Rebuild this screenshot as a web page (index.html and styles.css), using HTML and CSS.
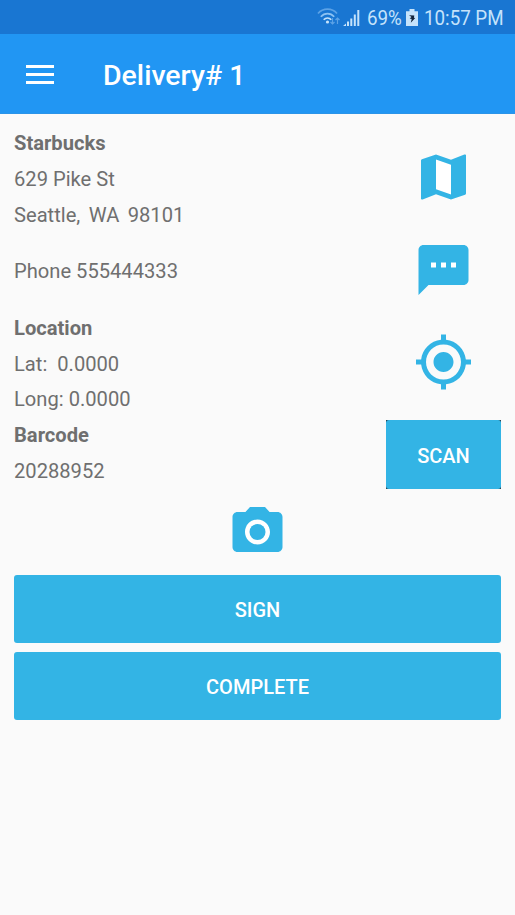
FILE: index.html
```html
<!DOCTYPE html>
<html lang="en">
<head>
<meta charset="utf-8">
<title>Delivery# 1</title>
<link rel="stylesheet" href="styles.css">
</head>
<body>
<div class="status">
  <svg class="wifi" width="24" height="20" viewBox="0 0 24 20" fill="none">
    <path d="M1 5.500C6-.3 15-.3 20 5.500" stroke="#5ca2e6" stroke-width="1.700"/>
    <path d="M3.800 8.800c3.800-4.200 9.600-4.200 13.400 0" stroke="#8dc2f2" stroke-width="1.700"/>
    <path d="M6.700 11.800c2.200-2.400 5.400-2.400 7.600 0" stroke="#c5e3fb" stroke-width="1.700"/>
    <circle cx="10.500" cy="14" r="1.600" fill="#c5e3fb"/>
    <path d="M15.500 10v6m-2-2l2 2 2-2M20.500 16v-6m-2 2l2-2 2 2" stroke="#5ca2e6" stroke-width="1.200"/>
  </svg>
  <svg class="signal" width="18" height="18" viewBox="0 0 18 18" fill="#c5e3fb">
    <path d="M0 17l3-2.500V17zM4 12.500h2V17H4zM7.300 9.500h2V17h-2zM10.800 5.500h2V17h-2zM14.300 1h2v16h-2z"/>
  </svg>
  <span class="percent">69%</span>
  <svg class="battery" width="12" height="19" viewBox="0 0 12 19">
    <path d="M3.500 1h5v2.200H12V18H0V3.200h3.500z" fill="#c5e3fb"/>
    <path d="M3 7.200l5.300.3-.4 2.200 1.300.3L4.800 14.800l.9-3.700-2-.5 1.800-1.700z" fill="#12233a"/>
  </svg>
  <span class="time">10:57 PM</span>
</div>
<header class="appbar">
  <div class="menu"><i></i><i></i><i></i></div>
  <h1>Delivery# 1</h1>
</header>
<main>
  <section class="row address">
    <div class="lines">
      <strong>Starbucks</strong>
      <span>629 Pike St</span>
      <span class="city">Seattle,&nbsp; WA&nbsp; 98101</span>
    </div>
    <div class="action"><svg class="icon" viewBox="-.2 0 24 24"><path class="fold" d="M9 5l6 2.110V19l-6-2.110z"/><path d="M20.700 3l-.36.03L15 5.100 9 3 3.360 4.900c-.21.07-.36.25-.36.48V20.700c0 .2.120.3.300.3l.360-.03L9 18.900l6 2.100 5.640-1.900c.21-.07.360-.25.360-.48V3.300c0-.2-.12-.3-.3-.3zM15 19l-6-2.110V5l6 2.110V19z"/></svg></div>
  </section>
  <section class="row phone">
    <div class="lines"><span>Phone 555444333</span></div>
    <div class="action"><svg class="icon" viewBox="-.2 0 24 24"><path class="fold" d="M6 8.500h12v3H6z"/><path d="M20 2H4c-1.100 0-1.990.9-1.990 2L2 22l4-4h14c1.100 0 2-.9 2-2V4c0-1.100-.9-2-2-2zM9 11H7V9h2v2zm4 0h-2V9h2v2zm4 0h-2V9h2v2z"/></svg></div>
  </section>
  <section class="row location">
    <div class="lines">
      <strong>Location</strong>
      <span>Lat:&nbsp; 0.0000</span>
      <span>Long: 0.0000</span>
    </div>
    <div class="action"><svg class="icon" viewBox="-.2 0 24 24"><path d="M12 8c-2.210 0-4 1.790-4 4s1.790 4 4 4 4-1.790 4-4-1.790-4-4-4zm8.940 3c-.46-4.170-3.770-7.480-7.940-7.940V1h-2v2.060C6.830 3.520 3.520 6.830 3.060 11H1v2h2.060c.46 4.170 3.770 7.480 7.940 7.940V23h2v-2.060c4.170-.46 7.480-3.770 7.940-7.940H23v-2h-2.060zM12 19c-3.870 0-7-3.130-7-7s3.130-7 7-7 7 3.130 7 7-3.130 7-7 7z"/></svg></div>
  </section>
  <section class="row barcode">
    <div class="lines">
      <strong>Barcode</strong>
      <span>20288952</span>
    </div>
    <div class="action scan"><button>SCAN</button></div>
  </section>
  <div class="camera"><svg class="icon" viewBox="-.2 0 24 24"><circle class="fold" cx="12" cy="12" r="5"/><circle cx="12" cy="12" r="3.200"/><path d="M9 2L7.170 4H4c-1.100 0-2 .9-2 2v12c0 1.100.9 2 2 2h16c1.100 0 2-.9 2-2V6c0-1.100-.9-2-2-2h-3.170L15 2H9zm3 15c-2.760 0-5-2.240-5-5s2.240-5 5-5 5 2.240 5 5-2.240 5-5 5z"/></svg></div>
  <div class="buttons">
    <button>SIGN</button>
    <button>COMPLETE</button>
  </div>
</main>
</body>
</html>
```
FILE: styles.css
```css
* { box-sizing: border-box; }
body {
  margin: 0;
  height: 915px;
  overflow: hidden;
  background: #fafafa;
  color: #6f6f6f;
  font-family: Roboto, sans-serif;
  font-size: 20.150px;
}
.status {
  height: 34px;
  padding: 2px 11px 0 0;
  display: flex;
  align-items: center;
  justify-content: flex-end;
  background: #1976d2;
  color: #c5e3fb;
  white-space: nowrap;
}
.wifi { margin-right: 2px; }
.signal { margin-right: 6px; }
.percent { width: 34px; margin-right: 5px; }
.battery { margin: 0 6px 2px 0; }
.time { width: 80px; }
.percent, .time {
  font-size: 20.500px;
  line-height: 32px;
  transform: scaleX(.915);
  transform-origin: 0 50%;
}
.appbar {
  height: 80px;
  padding-left: 26px;
  display: flex;
  align-items: center;
  background: #2196f3;
  border-bottom: 1px solid #2b94e8;
  color: #fff;
}
.menu {
  width: 28px;
  height: 19px;
  margin: 1px 49px 0 0;
  display: flex;
  flex-direction: column;
  justify-content: space-between;
}
.menu i { height: 3px; background: #fff; }
h1 {
  margin: 5px 0 0;
  font-size: 28.500px;
  font-weight: 500;
  line-height: 34px;
}
main { padding: 11px 14px 0; }
.row { display: flex; justify-content: space-between; align-items: center; }
.lines {
  display: flex;
  flex-direction: column;
  padding-top: 2px;
  line-height: 35.800px;
}
.lines strong { font-weight: 700; }
.city { word-spacing: -.8px; }
.action { width: 115px; display: flex; justify-content: center; }
.icon { display: block; width: 60px; height: 60px; margin-right: 1px; fill: #33b4e5; }
.fold { fill: #fff; }
.address { height: 108px; }
.address .icon { margin-top: -5px; }
.phone { height: 76px; }
.phone .lines { padding-top: 1px; }
.phone .icon { margin-top: -2px; }
.location { height: 108px; }
.location .lines { padding-top: 3px; }
.location .icon { margin-top: -3px; }
.barcode { height: 72px; }
.scan { height: 69px; margin-top: 3px; background: #263e49; }
button {
  width: 100%;
  height: 69px;
  padding: 2px 0 0;
  border: 0;
  border-radius: 3px;
  background: #33b4e5;
  color: #fff;
  font-family: inherit;
  font-size: 20px;
  font-weight: 500;
}
.camera { display: flex; justify-content: center; margin: 13px 0 12.500px; }
.buttons { display: flex; flex-direction: column; gap: 9px; }
.buttons button { height: 68.400px; padding-top: 2px; }
```
